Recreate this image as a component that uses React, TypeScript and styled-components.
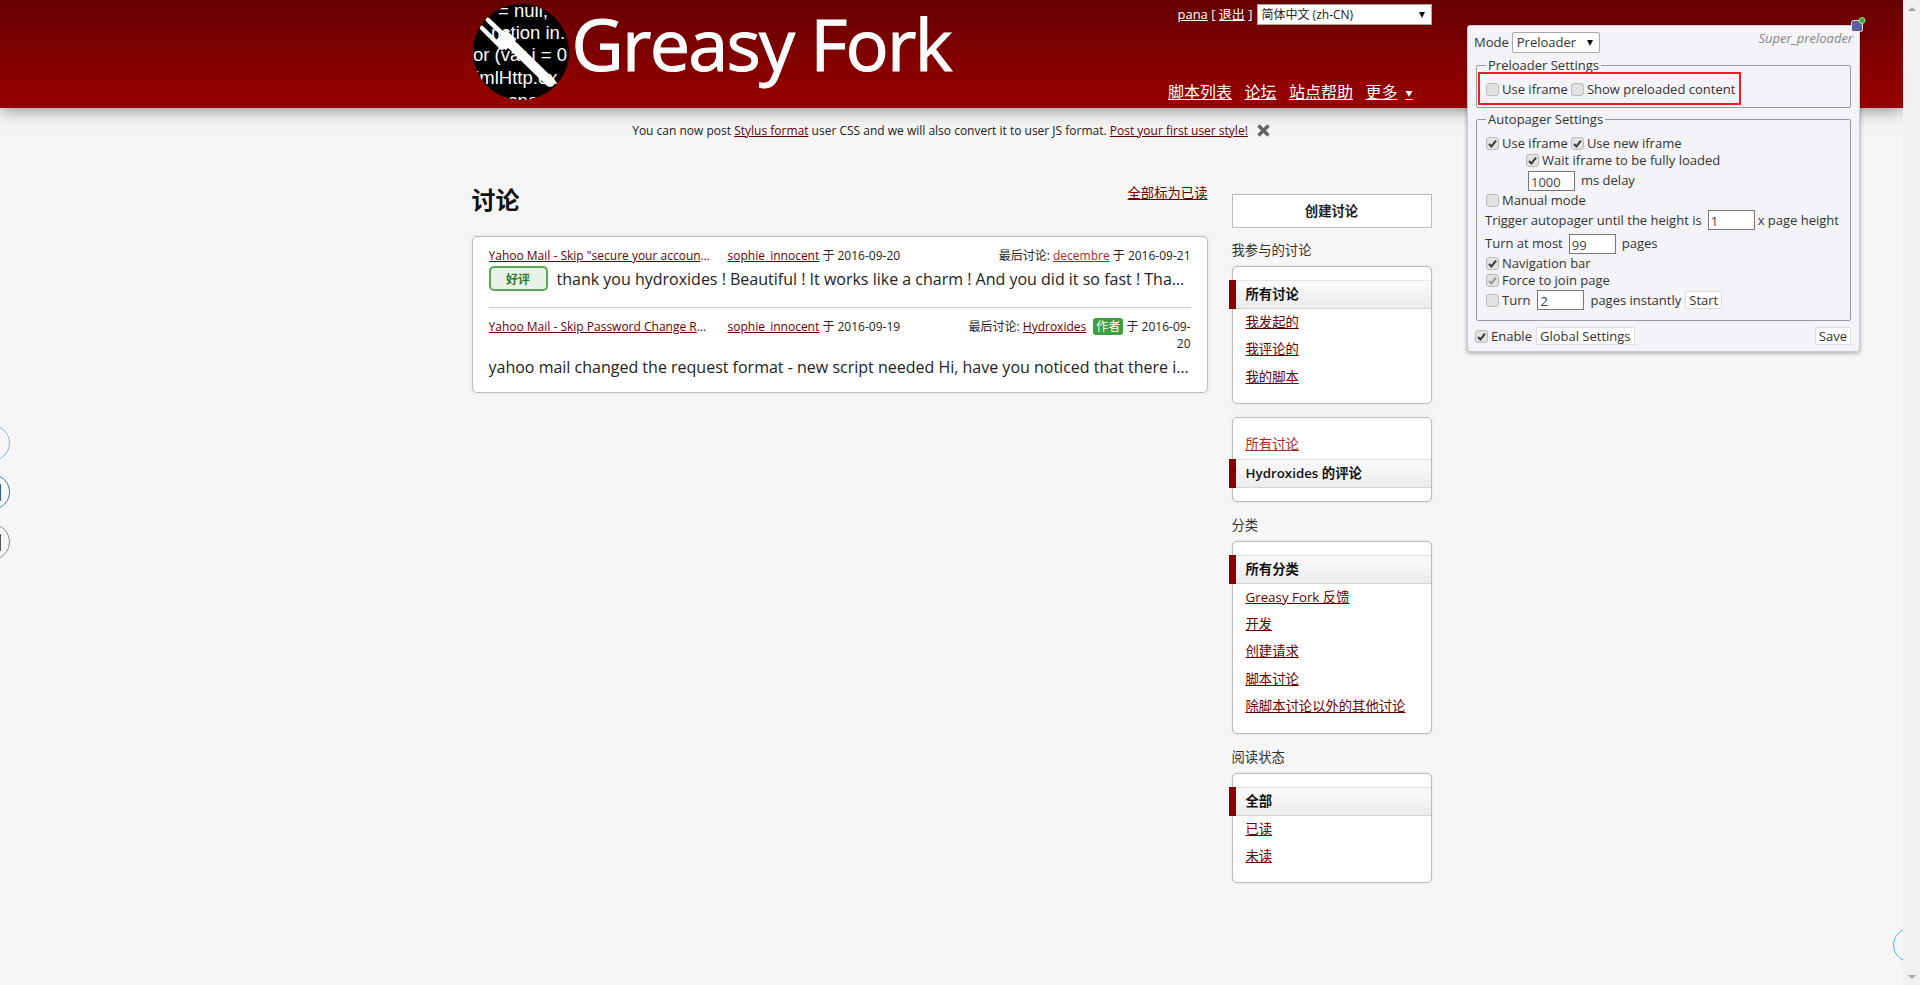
import React from "react";
import styled, { createGlobalStyle } from "styled-components";

const FONT = `"Open Sans", "Noto Sans CJK SC", sans-serif`;
const CJK = `"Noto Sans CJK SC", "Open Sans", sans-serif`;

const Global = createGlobalStyle`
  html, body { margin: 0; padding: 0; height: 100%; overflow: hidden; }
  body { background: #f5f5f5; color: #222; font: 13.33px/17px ${FONT}; }
  a { color: #670000; }
`;

const Page = styled.div`display: flex; height: 985px; width: 1920px; overflow: hidden;`;
const Main = styled.div`position: relative; flex: 1; min-width: 0; overflow: hidden; background: #f6f6f6;`;
const Track = styled.div`
  width: 17px; background: #f1f1f1; display: flex; flex-direction: column;
  justify-content: space-between; align-items: center; padding: 7px 0 6px; box-sizing: border-box;
`;
const Arrow = styled.div<{ $down?: boolean }>`
  width: 0; height: 0; border-left: 4px solid transparent; border-right: 4px solid transparent;
  ${p => p.$down ? "border-top: 4px solid #a3a3a3;" : "border-bottom: 4px solid #a3a3a3;"}
`;

const Header = styled.header`
  height: 108px; position: relative; z-index: 1;
  background: linear-gradient(#670000, #990000);
  box-shadow: 0 0 18px rgba(0, 0, 0, 0.55);
`;
const HeaderInner = styled.div`
  width: 960px; height: 108px; margin: 0 auto; display: flex; justify-content: space-between;
`;
const Brand = styled.div`display: flex; align-items: flex-start; padding-top: 4px;`;
const Title = styled.div`
  font: 400 72px/78px ${FONT}; color: #fff; letter-spacing: -1.8px; margin-left: 2px; -webkit-text-stroke: 1px #fff;
`;
const Side = styled.div`display: flex; flex-direction: column; justify-content: space-between; align-items: flex-end; height: 108px;`;
const UserRow = styled.div`display: flex; align-items: center; gap: 4px; padding-top: 4px; color: #fff; font-size: 13px;`;
const WhiteLink = styled.a`color: #fff; text-decoration: underline;`;
const LangSelect = styled.div`
  width: 175px; height: 21px; box-sizing: border-box; background: #fff; border: 1px solid #a9a9a9;
  color: #222; font: 12px/19px ${FONT}; padding-left: 4px; display: flex; justify-content: space-between; align-items: center;
`;
const SelectArrow = styled.span`
  width: 0; height: 0; border-left: 3.5px solid transparent; border-right: 3.5px solid transparent;
  border-top: 6px solid #111; margin-right: 6px;
`;
const Nav = styled.nav`display: flex; gap: 12.5px; padding-bottom: 3px; margin-right: 15px; font-size: 16px; line-height: 22px;`;
const NavLink = styled.a`color: #fff; text-decoration: underline;`;
const Caret = styled.span`font-size: 7px; margin-left: 8px; padding-right: 4px; vertical-align: 2px;`;

const Notice = styled.div`
  display: flex; justify-content: center; align-items: center; gap: 8px; height: 44px;
  font-size: 12px;
`;
const CloseX = styled.svg`width: 15px; height: 15px; flex: none;`;

const Content = styled.div`width: 960px; margin: 0 auto; display: flex; gap: 24px;`;
const Left = styled.div`width: 736px;`;
const TitleRow = styled.div`display: flex; justify-content: space-between; align-items: flex-start; height: 84px;`;
const H2 = styled.h2`margin: 30px 0 0; font: 700 24px/34px ${CJK}; color: #111;`;
const MarkRead = styled.a`margin-top: 32px; font: 13.33px/17px ${CJK};`;

const Card = styled.div`
  background: #fff; border: 1px solid #bbb; border-radius: 5px; box-sizing: border-box;
  height: 157px; padding: 0 16px; box-shadow: 0 0 4px #ddd;
`;
const Row = styled.div<{ $last?: boolean }>`
  padding: ${p => (p.$last ? "10px 0 0" : "10px 0 16px")};
  ${p => !p.$last && "border-bottom: 1px solid #ccc;"}
`;
const Meta = styled.div`display: grid; grid-template-columns: 239px 1fr 240px; font-size: 12px; line-height: 17px;`;
const TopicTitle = styled.a`
  display: block; width: 222px; white-space: nowrap; overflow: hidden; text-overflow: ellipsis;
`;
const LastPost = styled.div`text-align: right;`;
const Soft = styled.a`color: #a42a2a;`;
const AuthorBadge = styled.span`
  display: inline-block; background: #3d9f3d; color: #fff; border-radius: 3px; padding: 0 1px; margin: 0 0 0 4px;
  font-size: 12px; line-height: 17px; width: 28px; text-align: center;
`;
const Body = styled.div`display: flex; align-items: center; gap: 9px; margin-top: 2px; height: 25px; font-size: 16px; line-height: 24px; color: #222;`;
const BodyText = styled.span`flex: 1; min-width: 0; white-space: nowrap; overflow: hidden; text-overflow: ellipsis;`;
const Good = styled.span`
  width: 59px; height: 25px; box-sizing: border-box; border: 2px solid #5aa75a; border-radius: 5px;
  background: #e8f2e8; color: #2f7d1d; text-align: center; font: 700 12px/21px ${CJK}; flex: none;
`;

const Sidebar = styled.aside`width: 200px; padding-top: 42px;`;
const CreateBtn = styled.a`
  display: block; height: 34px; box-sizing: border-box; border: 1px solid #bbb; background: #fff;
  text-align: center; font: 700 13.33px/32px ${CJK}; color: #222; text-decoration: none;
`;
const GroupLabel = styled.div<{ $top: number }>`font: 13.33px/17px ${CJK}; margin-top: ${p => p.$top}px; margin-bottom: 8px; color: #333;`;
const SideBox = styled.div<{ $top?: number; $pb?: number }>`
  background: #fff; border: 1px solid #bbb; border-radius: 5px; padding: 13px 0 ${p => p.$pb ?? 12}px; box-shadow: 0 0 3px #ddd;
  margin-top: ${p => p.$top ?? 0}px;
`;
const Item = styled.a<{ $soft?: boolean }>`
  display: block; height: 27.4px; padding-left: 13px; font: 13.33px/27px ${FONT}; color: ${p => (p.$soft ? "#a42a2a" : "#670000")};
  width: max-content; text-decoration: underline;
`;
const ActiveItem = styled.div<{ $semi?: boolean }>`
  position: relative; height: 29px; box-sizing: border-box; padding-left: 13px;
  border-top: 1px solid #e4e4e4; border-bottom: 1px solid #d4d4d4;
  background: linear-gradient(#fafafa, #ececec);
  font: ${p => (p.$semi ? 600 : 700)} 13.33px/27px ${FONT}; color: #111;
  &::before {
    content: ""; position: absolute; left: -4px; top: -1px; bottom: -1px; width: 7px; background: #8b0000;
  }
`;

const Panel = styled.div`
  position: absolute; left: 1467px; top: 25px; width: 393px; height: 327px; box-sizing: border-box;
  background: #f3f3f8; border: 1px solid #ccc; border-radius: 3px; z-index: 5;
  box-shadow: 0 1px 4px rgba(0, 0, 0, 0.35); padding: 6px 8px 0 7px; color: #333; font: 13px/17px ${FONT};
`;
const StatusIcon = styled.svg`position: absolute; right: -7px; top: -9px; width: 15px; height: 15px;`;
const ModeRow = styled.div`display: flex; align-items: center; height: 21px; margin-left: -1px; gap: 3px;`;
const ModeSelect = styled.div`
  width: 88px; height: 21px; box-sizing: border-box; background: #fff; border: 1px solid #aaa; border-radius: 2px;
  padding-left: 4px; display: flex; justify-content: space-between; align-items: center; line-height: 19px;
`;
const Brandline = styled.div`margin-left: auto; margin-top: -9px; font: italic 13px/17px ${FONT}; color: #888; margin-right: -2px;`;
const Fieldset = styled.fieldset<{ $top: number; $pad: number }>`
  margin: ${p => p.$top}px 0 0 1px; padding: 0 9px ${p => p.$pad}px 8px; border: 1px solid #999; border-radius: 2px;
  width: 375px; box-sizing: border-box; min-width: 0;
`;
const Legend = styled.legend`padding: 0 2px 0 2px; margin-left: 1px; line-height: 17px;`;
const Line = styled.div<{ $h?: number; $indent?: number; $top?: number }>`
  display: flex; align-items: center; height: ${p => p.$h ?? 17}px; padding-left: ${p => p.$indent ?? 0}px;
  margin-top: ${p => p.$top ?? 0}px; white-space: nowrap;
`;
const Box = styled.span<{ $muted?: boolean; $gapL?: number }>`
  width: 11px; height: 11px; flex: none; border: 1px solid #bbb; border-radius: 3px; background: #e2e2e2;
  display: inline-flex; align-items: center; justify-content: center; margin: 0 3px 0 ${p => p.$gapL ?? 1}px;
  color: ${p => (p.$muted ? "#9a9a9a" : "#3b3b3b")};
`;
const Num = styled.span<{ $ml?: number; $mr?: number }>`
  width: 47px; height: 20px; box-sizing: border-box; border: 1px solid #777; background: #fff;
  padding-left: 2px; line-height: 21px; margin: 0 ${p => p.$mr ?? 6}px 0 ${p => p.$ml ?? 6}px; flex: none; color: #444;
`;
const Btn = styled.span<{ $ml?: number }>`
  height: 18px; box-sizing: border-box; background: #fff; border: 1px solid #ddd; border-radius: 2px;
  line-height: 16px; padding: 0 3px; margin-left: ${p => p.$ml ?? 0}px; flex: none;
`;
const Foot = styled.div`display: flex; align-items: center; height: 18px; margin-top: 6px; margin-left: -1px;`;
const Spacer = styled.div`flex: 1;`;
const Annot = styled.div`
  position: absolute; left: 10px; top: 46px; width: 263px; height: 33px; box-sizing: border-box; border: 2px solid #ee1c25;
`;

const Ring = styled.div<{ $top: number; $c: string; $bar?: string }>`
  position: absolute; left: -26px; top: ${p => p.$top}px; width: 36px; height: 36px; box-sizing: border-box;
  border: 1px solid ${p => p.$c}; border-radius: 50%; overflow: hidden;
  &::after {
    content: ""; display: ${p => (p.$bar ? "block" : "none")}; position: absolute; left: 25px; top: 9px; width: 1px; height: 17px;
    background: ${p => p.$bar};
  }
`;
const Bubble = styled.div`
  position: absolute; right: -24px; top: 928px; width: 34px; height: 34px; box-sizing: border-box;
  border: 1.5px solid #45bde8; border-radius: 50%;
`;

const Check = ({ on, muted, gapL }: { on?: boolean; muted?: boolean; gapL?: number }) => (
  <Box $muted={muted} $gapL={gapL}>
    {on && (
      <svg width="9" height="9" viewBox="0 0 9 9">
        <path d="M1 5 L3.4 7.4 L8 1.6" fill="none" stroke="currentColor" strokeWidth="2" />
      </svg>
    )}
  </Box>
);

const Logo = () => (
  <svg width="98" height="98" viewBox="0 0 98 98" style={{ flex: "none" }}>
    <defs>
      <clipPath id="lc"><circle cx="49" cy="48" r="48" /></clipPath>
    </defs>
    <circle cx="49" cy="48" r="48" fill="#000" />
    <g clipPath="url(#lc)" fill="#fff" fontFamily="Liberation Sans, sans-serif" fontSize="18.5">
      <text x="26" y="13">= null,</text>
      <text x="19" y="35">nction in.</text>
      <text x="1" y="57">or (var i = 0</text>
      <text x="-5" y="80">XmlHttp.ex</text>
      <text x="26" y="103">esponde</text>
    </g>
    <g stroke="#fff" fill="none" strokeLinecap="round">
      <path d="M16 16 L36 35" strokeWidth="4.5" />
      <path d="M10 24 L30 44" strokeWidth="4.5" />
      <path d="M29 31 L39 41" strokeWidth="15" strokeLinecap="butt" />
      <path d="M40 41 L78 78" strokeWidth="10" />
    </g>
  </svg>
);

const Group = ({ active, items }: { active: string; items: string[] }) => (
  <>
    <ActiveItem>{active}</ActiveItem>
    {items.map(i => <Item href="#" key={i}>{i}</Item>)}
  </>
);

export default function App() {
  return (
    <>
      <Global />
      <Page>
        <Main>
          <Header>
            <HeaderInner>
              <Brand>
                <Logo />
                <Title>Greasy Fork</Title>
              </Brand>
              <Side>
                <UserRow>
                  <span><WhiteLink href="#">pana</WhiteLink> [ <WhiteLink href="#">退出</WhiteLink> ]</span>
                  <LangSelect>简体中文 (zh-CN)<SelectArrow /></LangSelect>
                </UserRow>
                <Nav>
                  <NavLink href="#">脚本列表</NavLink>
                  <NavLink href="#">论坛</NavLink>
                  <NavLink href="#">站点帮助</NavLink>
                  <NavLink href="#">更多<Caret>▼</Caret></NavLink>
                </Nav>
              </Side>
            </HeaderInner>
          </Header>

          <Notice>
            <span>
              You can now post <a href="#">Stylus format</a> user CSS and we will also convert it to user JS format. <a href="#">Post your first user style!</a>
            </span>
            <CloseX viewBox="0 0 15 15">
              <path d="M2.5 2.5 L12.5 12.5 M12.5 2.5 L2.5 12.5" stroke="#666" strokeWidth="3.5" />
            </CloseX>
          </Notice>

          <Content>
            <Left>
              <TitleRow>
                <H2>讨论</H2>
                <MarkRead href="#">全部标为已读</MarkRead>
              </TitleRow>
              <Card>
                <Row>
                  <Meta>
                    <TopicTitle href="#">Yahoo Mail - Skip "secure your account" page after login</TopicTitle>
                    <span><a href="#">sophie_innocent</a> 于 2016-09-20</span>
                    <LastPost>最后讨论: <Soft href="#">decembre</Soft> 于 2016-09-21</LastPost>
                  </Meta>
                  <Body>
                    <Good>好评</Good>
                    <BodyText>thank you hydroxides ! Beautiful ! It works like a charm ! And you did it so fast ! Thanks a lot for all of this work</BodyText>
                  </Body>
                </Row>
                <Row $last>
                  <Meta>
                    <TopicTitle href="#">Yahoo Mail - Skip Password Change Reminder page after login</TopicTitle>
                    <span><a href="#">sophie_innocent</a> 于 2016-09-19</span>
                    <LastPost>最后讨论: <a href="#">Hydroxides</a> <AuthorBadge>作者</AuthorBadge> 于 2016-09-<br />20</LastPost>
                  </Meta>
                  <Body>
                    <BodyText>yahoo mail changed the request format - new script needed Hi, have you noticed that there is a new request format in use now</BodyText>
                  </Body>
                </Row>
              </Card>
            </Left>

            <Sidebar>
              <CreateBtn href="#">创建讨论</CreateBtn>
              <GroupLabel $top={13}>我参与的讨论</GroupLabel>
              <SideBox>
                <Group active="所有讨论" items={["我发起的", "我评论的", "我的脚本"]} />
              </SideBox>
              <SideBox $top={13} $pb={13}>
                <Item href="#" $soft>所有讨论</Item>
                <ActiveItem $semi>Hydroxides 的评论</ActiveItem>
              </SideBox>
              <GroupLabel $top={14}>分类</GroupLabel>
              <SideBox>
                <Group active="所有分类" items={["Greasy Fork 反馈", "开发", "创建请求", "脚本讨论", "除脚本讨论以外的其他讨论"]} />
              </SideBox>
              <GroupLabel $top={14}>阅读状态</GroupLabel>
              <SideBox>
                <Group active="全部" items={["已读", "未读"]} />
              </SideBox>
            </Sidebar>
          </Content>

          <Ring $top={425} $c="#8fb1d4" />
          <Ring $top={474} $c="#4a78ac" $bar="#2a5e9c" />
          <Ring $top={524} $c="#8a8a8a" $bar="#555" />
          <Bubble />

          <Panel>
            <StatusIcon viewBox="0 0 15 15">
              <rect x="0.5" y="3.5" width="11" height="11" rx="2" fill="#5e5f9f" stroke="#e8e8f2" />
              <circle cx="11" cy="3.5" r="3" fill="#2fb52f" stroke="#dfe" strokeWidth="0.6" />
            </StatusIcon>
            <ModeRow>
              Mode
              <ModeSelect>Preloader<SelectArrow /></ModeSelect>
              <Brandline>Super_preloader</Brandline>
            </ModeRow>
            <Fieldset $top={4} $pad={9}>
              <Legend>Preloader Settings</Legend>
              <Line $top={7}>
                <Check />Use iframe
                <Check gapL={3} />Show preloaded content
              </Line>
            </Fieldset>
            <Fieldset $top={3} $pad={9}>
              <Legend>Autopager Settings</Legend>
              <Line $top={7}>
                <Check on />Use iframe
                <Check on gapL={3} />Use new iframe
              </Line>
              <Line $indent={40}><Check on />Wait iframe to be fully loaded</Line>
              <Line $h={23} $indent={43}><Num $ml={0}>1000</Num>ms delay</Line>
              <Line $h={16}><Check />Manual mode</Line>
              <Line $h={24}>Trigger autopager until the height is<Num $mr={3}>1</Num>x page height</Line>
              <Line $h={23}>Turn at most<Num>99</Num>pages</Line>
              <Line><Check on />Navigation bar</Line>
              <Line><Check on muted />Force to join page</Line>
              <Line $h={22}>
                <Check />Turn<Num $ml={7}>2</Num>pages instantly<Btn $ml={4}>Start</Btn>
              </Line>
            </Fieldset>
            <Foot>
              <Check on />Enable<Btn $ml={4}>Global Settings</Btn>
              <Spacer />
              <Btn>Save</Btn>
            </Foot>
            <Annot />
          </Panel>
        </Main>
        <Track>
          <Arrow />
          <Arrow $down />
        </Track>
      </Page>
    </>
  );
}
